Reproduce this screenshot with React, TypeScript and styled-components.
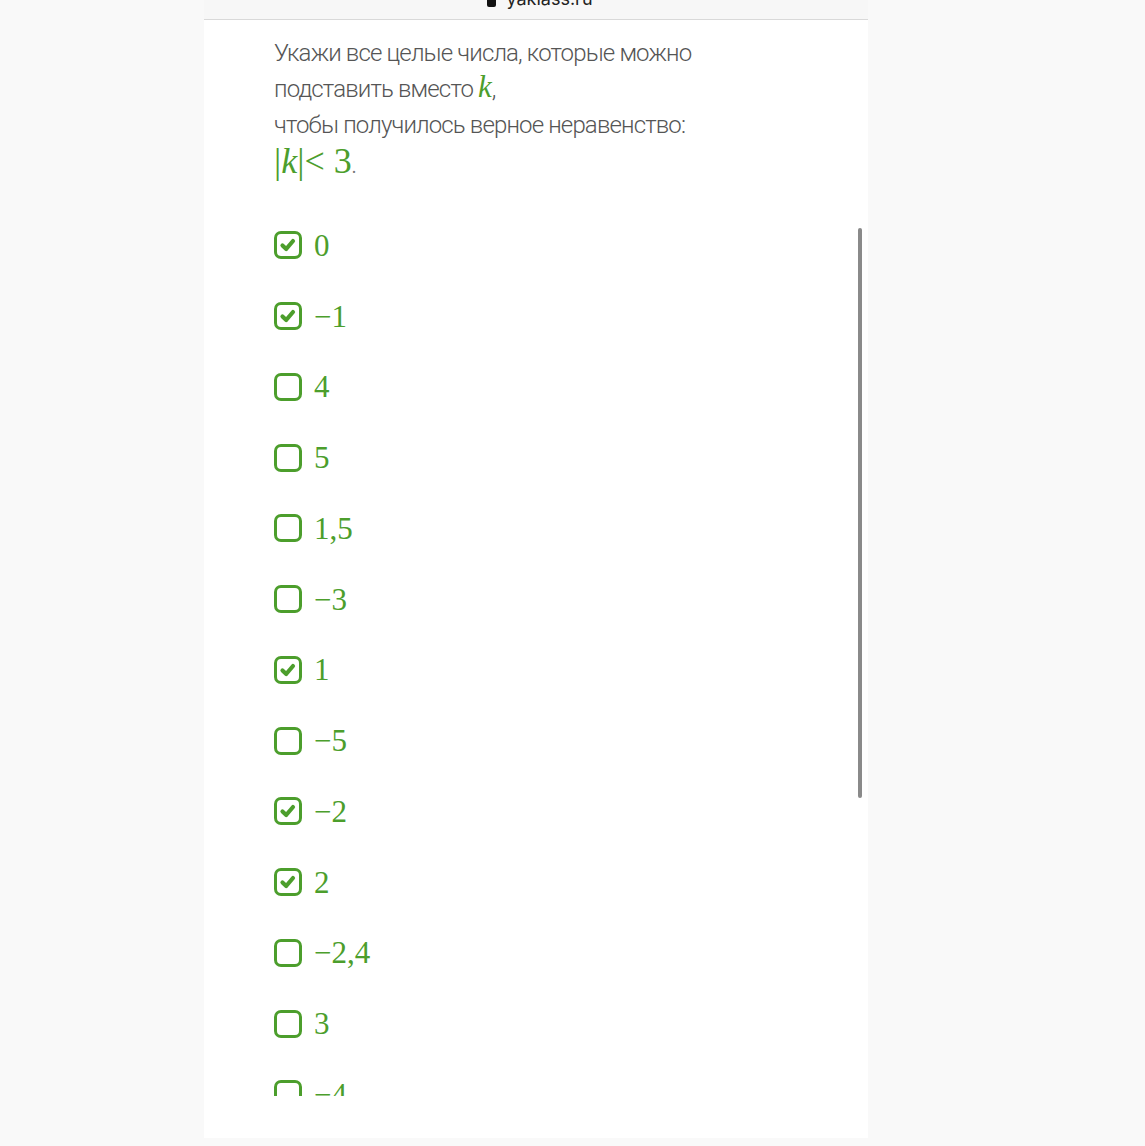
import React from 'react';
import styled, { createGlobalStyle } from 'styled-components';

const GlobalStyle = createGlobalStyle`
  html, body {
    margin: 0;
    padding: 0;
    background: #f9f9f9;
  }
`;

const green = '#4c9e2c';

const options: { label: string; checked: boolean }[] = [
  { label: '0', checked: true },
  { label: '\u22121', checked: true },
  { label: '4', checked: false },
  { label: '5', checked: false },
  { label: '1,5', checked: false },
  { label: '\u22123', checked: false },
  { label: '1', checked: true },
  { label: '\u22125', checked: false },
  { label: '\u22122', checked: true },
  { label: '2', checked: true },
  { label: '\u22122,4', checked: false },
  { label: '3', checked: false },
  { label: '\u22124', checked: false },
];

const App = () => {
  return (
    <>
      <GlobalStyle />
      <Page>
        <Screen>
          <AddressBar>
            <Lock />
            <Url>yaklass.ru</Url>
          </AddressBar>
          <Question>
            <Line>Укажи все целые числа, которые можно</Line>
            <Line>
              подставить вместо <MathVar>k</MathVar>,
            </Line>
            <Line>чтобы получилось верное неравенство:</Line>
            <MathLine>
              |<MathVar $big>k</MathVar>|&lt; 3<Dot>.</Dot>
            </MathLine>
          </Question>
          <ListViewport>
            <List>
              {options.map((o) => (
                <Option key={o.label}>
                  <Box>
                    {o.checked && (
                      <svg width="22" height="22" viewBox="0 0 22 22">
                        <polyline
                          points="5.5,11.5 9.2,15 16,7"
                          fill="none"
                          stroke={green}
                          strokeWidth="4.2"
                          strokeLinecap="round"
                          strokeLinejoin="round"
                        />
                      </svg>
                    )}
                  </Box>
                  <Value>{o.label}</Value>
                </Option>
              ))}
            </List>
            <Scrollbar />
          </ListViewport>
        </Screen>
      </Page>
    </>
  );
};

const Page = styled.div`
  min-height: 1146px;
  padding-left: 204px;
  background: #f9f9f9;
`;

const Screen = styled.div`
  width: 664px;
  height: 1138px;
  background: #ffffff;
  display: flex;
  flex-direction: column;
`;

const AddressBar = styled.div`
  height: 19px;
  background: #f7f7f7;
  border-bottom: 1px solid #d9d9d9;
  overflow: hidden;
  display: flex;
  justify-content: center;
  align-items: flex-start;
  gap: 10px;
  padding-left: 8px;
  flex-shrink: 0;
`;

const Lock = styled.span`
  width: 9px;
  height: 7px;
  background: #111;
  border-radius: 0 0 2px 2px;
`;

const Url = styled.span`
  font-family: 'Inter', 'Liberation Sans', sans-serif;
  font-size: 18px;
  line-height: 18px;
  color: #222;
  margin-top: -10px;
`;

const Question = styled.div`
  padding: 15px 0 0 70px;
  font-family: 'Roboto', 'Liberation Sans', sans-serif;
  font-weight: 300;
  font-size: 24px;
  letter-spacing: -0.85px;
  color: #555555;
`;

const Line = styled.div`
  height: 36px;
  line-height: 36px;
  white-space: nowrap;
`;

const MathVar = styled.i<{ $big?: boolean }>`
  font-family: 'Liberation Serif', serif;
  font-size: ${(p) => (p.$big ? '36px' : '31px')};
  line-height: 0;
  color: ${green};
  letter-spacing: 0;
`;

const MathLine = styled.div`
  height: 36px;
  line-height: 36px;
  font-family: 'Liberation Serif', serif;
  font-size: 36px;
  letter-spacing: 0;
  color: ${green};
`;

const Dot = styled.span`
  font-size: 18px;
  color: #777;
`;

const ListViewport = styled.div`
  position: relative;
  margin-top: 31px;
  height: 886px;
  overflow: hidden;
`;

const List = styled.div`
  display: flex;
  flex-direction: column;
  padding-left: 70px;
`;

const Option = styled.div`
  height: 70.75px;
  display: flex;
  align-items: center;
  gap: 12px;
`;

const Box = styled.span`
  width: 28px;
  height: 28px;
  box-sizing: border-box;
  border: 3px solid ${green};
  border-radius: 7px;
  display: flex;
  align-items: center;
  justify-content: center;
  flex-shrink: 0;
`;

const Value = styled.span`
  font-family: 'Liberation Serif', serif;
  font-size: 31px;
  line-height: 1;
  color: ${green};
`;

const Scrollbar = styled.div`
  position: absolute;
  top: 18px;
  right: 6px;
  width: 4px;
  height: 570px;
  border-radius: 2px;
  background: #8a8a8a;
`;

export default App;
